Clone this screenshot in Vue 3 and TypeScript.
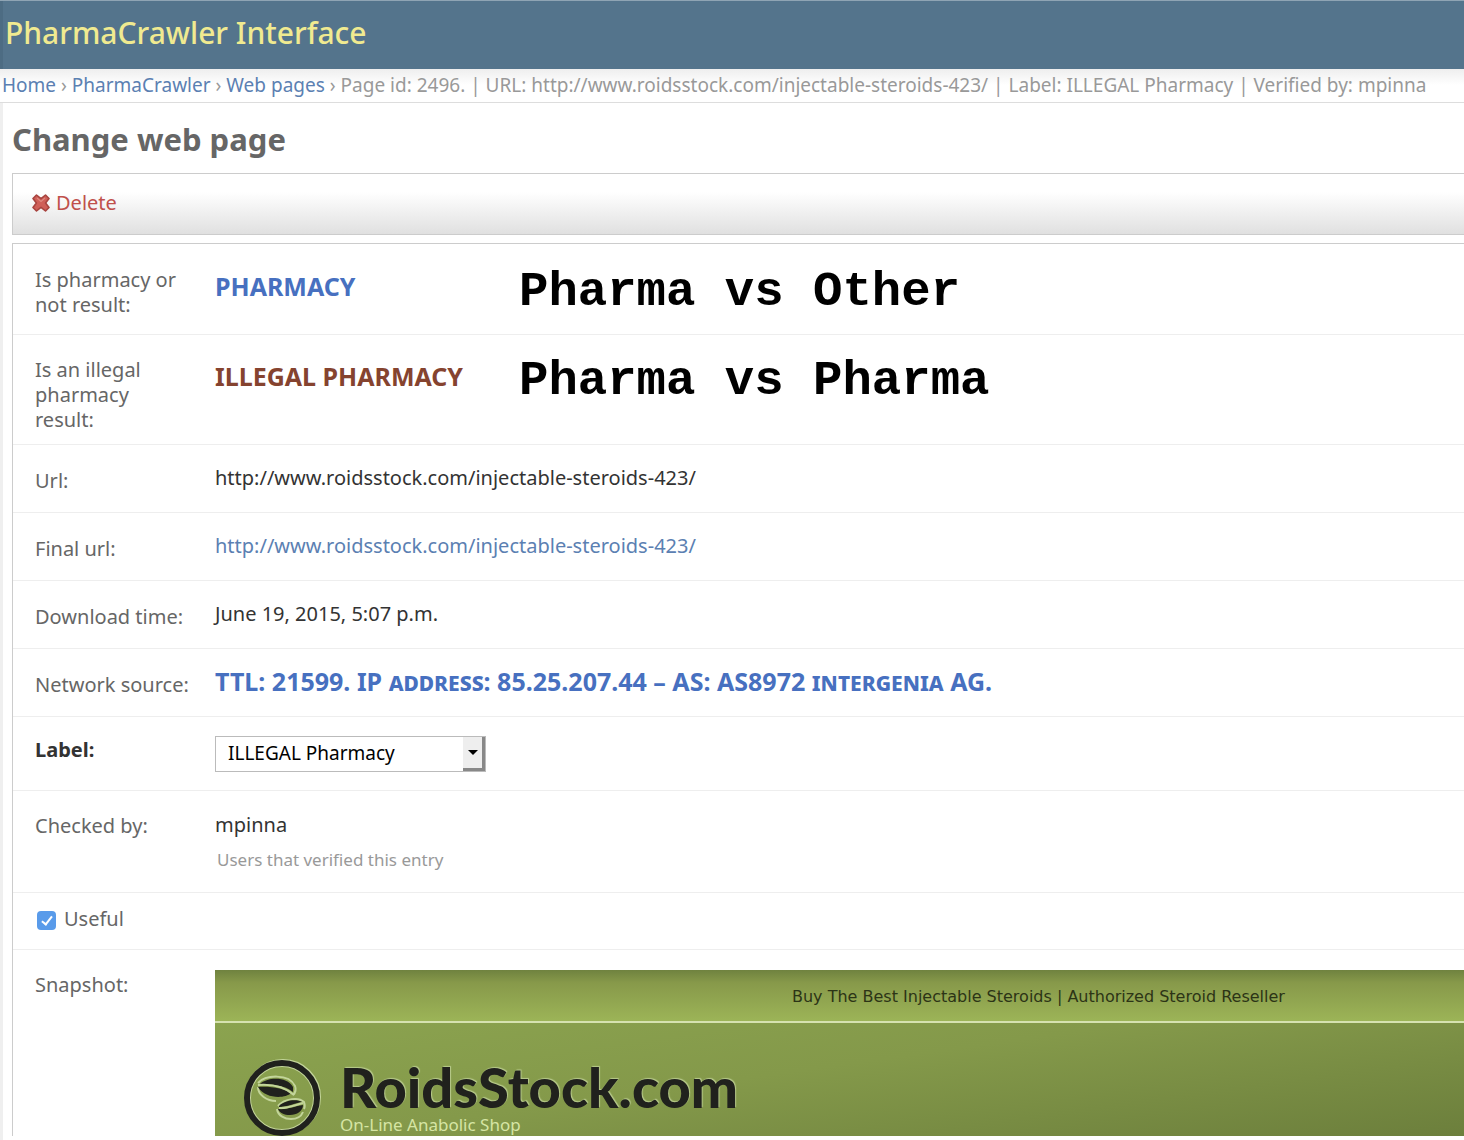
<script setup lang="ts">
import { ref } from 'vue'

interface Crumb {
  text: string
  href: string
}

interface TextRow {
  label: string
  value: string
  kind: 'plain' | 'link' | 'network'
}

const crumbs: Crumb[] = [
  { text: 'Home', href: '#home' },
  { text: 'PharmaCrawler', href: '#app' },
  { text: 'Web pages', href: '#pages' },
]

const pageUrl = 'http://www.roidsstock.com/injectable-steroids-423/'
const pageTitle = `Page id: 2496. | URL: ${pageUrl} | Label: ILLEGAL Pharmacy | Verified by: mpinna`

const rows: TextRow[] = [
  { label: 'Url:', value: pageUrl, kind: 'plain' },
  { label: 'Final url:', value: pageUrl, kind: 'link' },
  { label: 'Download time:', value: 'June 19, 2015, 5:07 p.m.', kind: 'plain' },
  {
    label: 'Network source:',
    value: 'TTL: 21599. IP address: 85.25.207.44 – AS: AS8972 intergenia AG.',
    kind: 'network',
  },
]

const labelChoice = ref('ILLEGAL Pharmacy')
const useful = ref(true)
</script>

<template>
  <div class="page">
    <header class="branding">
      <div class="site-name">PharmaCrawler Interface</div>
    </header>
    <nav class="breadcrumbs">
      <template v-for="c in crumbs" :key="c.text"><a :href="c.href">{{ c.text }}</a> › </template>{{ pageTitle }}
    </nav>

    <main class="content">
      <h1>Change web page</h1>

      <div class="submit-row">
        <a class="delete" href="#delete">
          <svg width="18" height="18" viewBox="0 0 18 18" aria-hidden="true">
            <path
              d="M4.5 1 L9 4.6 L13.5 1 L17 4.5 L13.6 9 L17 13.5 L13.5 17 L9 13.4 L4.5 17 L1 13.5 L4.4 9 L1 4.5 Z"
              fill="#cf5f58"
              stroke="#a8443f"
              stroke-width="1.6"
              stroke-linejoin="round"
            />
            <path d="M5 4 L9 7.4 L13 4" fill="none" stroke="#e08a80" stroke-width="1.2" />
          </svg>
          Delete
        </a>
      </div>

      <form class="module" @submit.prevent>
        <div class="row row-first">
          <div class="label">Is pharmacy or not result:</div>
          <div class="result">
            <strong class="verdict verdict-ok">PHARMACY</strong>
            <span class="note">Pharma vs Other</span>
          </div>
        </div>
        <div class="row row-tall">
          <div class="label">Is an illegal pharmacy result:</div>
          <div class="result">
            <strong class="verdict verdict-bad">ILLEGAL PHARMACY</strong>
            <span class="note">Pharma vs Pharma</span>
          </div>
        </div>

        <div v-for="r in rows" :key="r.label" class="row">
          <div class="label">{{ r.label }}</div>
          <div class="value">
            <a v-if="r.kind === 'link'" :href="r.value">{{ r.value }}</a>
            <strong v-else-if="r.kind === 'network'" class="network">{{ r.value }}</strong>
            <template v-else>{{ r.value }}</template>
          </div>
        </div>

        <div class="row row-select">
          <label class="label required" for="page-label">Label:</label>
          <div class="select-box">
            <select id="page-label" v-model="labelChoice">
              <option>ILLEGAL Pharmacy</option>
              <option>LEGAL Pharmacy</option>
              <option>Other</option>
            </select>
            <span class="select-arrow" aria-hidden="true"></span>
          </div>
        </div>

        <div class="row row-checked">
          <div class="label">Checked by:</div>
          <div class="value">
            mpinna
            <p class="help">Users that verified this entry</p>
          </div>
        </div>

        <div class="row row-useful">
          <input id="useful" v-model="useful" type="checkbox" />
          <label for="useful">Useful</label>
        </div>

        <div class="row row-snapshot">
          <div class="label">Snapshot:</div>
          <div class="snapshot">
            <div class="shop-strip">Buy The Best Injectable Steroids | Authorized Steroid Reseller</div>
            <div class="shop-head">
              <svg class="shop-mark" width="80" height="80" viewBox="0 0 80 80" aria-hidden="true">
                <circle cx="40" cy="38" r="36" fill="none" stroke="#c3d59a" stroke-width="4" />
                <circle cx="39" cy="39" r="32" fill="none" stroke="#c3d59a" stroke-width="2" />
                <circle cx="39" cy="39" r="35" fill="none" stroke="#20211d" stroke-width="6" />
                <path d="M15 28 C15 36 24 42 33 42" fill="none" stroke="#c3d59a" stroke-width="2" />
                <path d="M34 50 C35 57 42 60 48 60 C53 60 58 58 60 53" fill="none" stroke="#c3d59a" stroke-width="2" />
                <path d="M15 24 C22 16 46 14 52 27 C54 32 51 35 50 36" fill="none" stroke="#c3d59a" stroke-width="2" />
                <path d="M35 47 C42 39 56 38 61 43 C62 46 62 48 61 50" fill="none" stroke="#c3d59a" stroke-width="2" />
                <g fill="#20211d">
                  <path d="M17 25 C24 18 44 17 50 28 C50 31 50 32 50 33 C42 26 28 25 17 25 Z" />
                  <path d="M15 28 C28 27 42 30 48 34 C42 40 22 40 15 28 Z" />
                  <path d="M36 47 C42 41 54 40 59 43 C52 44 44 48 36 48 Z" />
                  <path d="M35 50 C44 51 52 47 60 46 C60 52 54 56 47 56 C41 56 37 54 35 50 Z" />
                </g>
                <path d="M15 26 C28 25 42 28 51 36 M36 49 C44 50 52 46 60 44" fill="none" stroke="#c3d59a" stroke-width="2" />
              </svg>
              <div class="shop-brand">
                <div class="shop-name">RoidsStock.com</div>
                <div class="shop-tag">On-Line Anabolic Shop</div>
              </div>
            </div>
          </div>
        </div>
      </form>
    </main>
  </div>
</template>

<style>
body {
  margin: 0;
  background: #fff;
}
</style>

<style scoped>
.page {
  box-sizing: border-box;
  overflow: hidden;
  padding-bottom: 4px;
  background: linear-gradient(to right, #efefef 3px, #fff 3px);
  color: #333;
  font-family: 'Noto Sans', 'Lucida Grande', sans-serif;
  font-size: 20px;
  line-height: 25px;
}

a {
  color: #5b80b2;
  text-decoration: none;
}

.branding {
  padding: 12px 5px 16px;
  border-top: 1px solid #8fa4b4;
  background: linear-gradient(to right, #4d6c83 3px, #54748c 3px);
}

.site-name {
  color: #f0ea90;
  font-size: 30px;
  font-weight: 500;
  line-height: 40px;
}

.breadcrumbs {
  padding: 4px 2px;
  border-bottom: 1px solid #ddd;
  background: linear-gradient(#eee, #fff 16px);
  color: #999;
  font-size: 19px;
  white-space: nowrap;
}

.content {
  padding-left: 12px;
}

h1 {
  margin: 0;
  padding: 16px 0 14px;
  color: #666;
  font-size: 31px;
  font-weight: 700;
  line-height: 40px;
}

.submit-row {
  margin-bottom: 8px;
  padding: 16px 19px 17px;
  border: 1px solid #ccc;
  border-right: 0;
  background: linear-gradient(#fff 30%, #e0e0e0);
}

.delete {
  display: inline-flex;
  align-items: center;
  gap: 6px;
  color: #c0504b;
}

.module {
  border: 1px solid #ccc;
  border-right: 0;
  border-bottom: 0;
}

.row {
  display: grid;
  grid-template-columns: 180px minmax(0, 1fr);
  padding: 0 0 19px 22px;
  border-bottom: 1px solid #eee;
}

.row-first {
  padding-bottom: 17px;
}

.row-tall {
  padding-bottom: 12px;
}

.label {
  padding: 23px 24px 0 0;
  color: #666;
}

.row-tall .label {
  padding-top: 22px;
}

.value {
  padding-top: 20px;
}

.result {
  display: grid;
  grid-template-columns: 304px 1fr;
  align-items: start;
}

.verdict {
  padding-top: 30px;
  font-size: 25px;
}

.row-tall .verdict {
  padding-top: 29px;
}

.verdict-ok,
.network {
  color: #4770c0;
}

.verdict-bad {
  color: #85432f;
}

.network {
  font-size: 25px;
  font-variant: small-caps;
}

.note {
  height: 44px;
  padding-top: 24px;
  color: #000;
  font-family: 'Liberation Mono', monospace;
  font-size: 49px;
  font-weight: 700;
  line-height: 48px;
}

.row-tall .note {
  padding-top: 22px;
}

.row-select {
  padding-bottom: 18px;
}

.row-select .label {
  padding-top: 20px;
}

.required {
  color: #333;
  font-weight: 700;
}

.select-box {
  position: relative;
  width: 271px;
  margin-top: 19px;
}

select {
  display: block;
  width: 100%;
  height: 36px;
  padding: 0 30px 0 12px;
  border: 1px solid #bbb;
  border-radius: 0;
  appearance: none;
  background: #fff;
  color: #000;
  font: inherit;
  font-size: 19px;
}

.select-arrow {
  position: absolute;
  top: 1px;
  right: 1px;
  bottom: 1px;
  display: flex;
  align-items: center;
  justify-content: center;
  width: 19px;
  border-right: 3px solid #888;
  border-bottom: 3px solid #888;
  background: #eee;
  pointer-events: none;
}

.select-arrow::after {
  border: 5px solid transparent;
  border-top-color: #000;
  border-bottom: 0;
  content: '';
}

.row-checked {
  padding-bottom: 20px;
}

.row-checked .label {
  padding-top: 22px;
}

.row-checked .value {
  padding-top: 21px;
}

.help {
  margin: 10px 0 0 2px;
  color: #999;
  font-size: 17px;
}

.row-useful {
  display: flex;
  align-items: center;
  gap: 8px;
  padding: 13px 0 18px 24px;
  color: #666;
}

input[type='checkbox'] {
  display: flex;
  justify-content: center;
  width: 19px;
  height: 19px;
  margin: 4px 0 0;
  border-radius: 4px;
  appearance: none;
  background: #c8c8c8;
}

input[type='checkbox']:checked {
  background: #599bea;
}

input[type='checkbox']:checked::after {
  width: 4px;
  height: 9px;
  margin-top: 3px;
  border: solid #fff;
  border-width: 0 2px 2px 0;
  content: '';
  transform: rotate(38deg);
}

.row-snapshot {
  padding-bottom: 0;
  border-bottom: 0;
}

.row-snapshot .label {
  padding-top: 22px;
}

.snapshot {
  margin-top: 20px;
}

.shop-strip {
  padding: 14px 0 12px 577px;
  border-bottom: 2px solid #d6e2b0;
  background: linear-gradient(#6f823f, #87994a 25%, #9cb457);
  color: #2c3416;
  font-family: 'DejaVu Sans', sans-serif;
  font-size: 16px;
  white-space: nowrap;
}

.shop-head {
  display: flex;
  gap: 17px;
  height: 77px;
  padding: 36px 0 0 28px;
  overflow: hidden;
  background: linear-gradient(172deg, #8ba34f, #84994a 45%, #6c7f3c);
}

.shop-mark {
  flex: none;
}

.shop-name {
  color: #20211d;
  font-family: Lato, sans-serif;
  font-size: 56px;
  font-weight: 900;
  line-height: 56px;
  text-shadow: 1px -1px 1px #b8cb8c;
}

.shop-tag {
  color: #d6e5a4;
  font-size: 17px;
  line-height: 20px;
}
</style>
